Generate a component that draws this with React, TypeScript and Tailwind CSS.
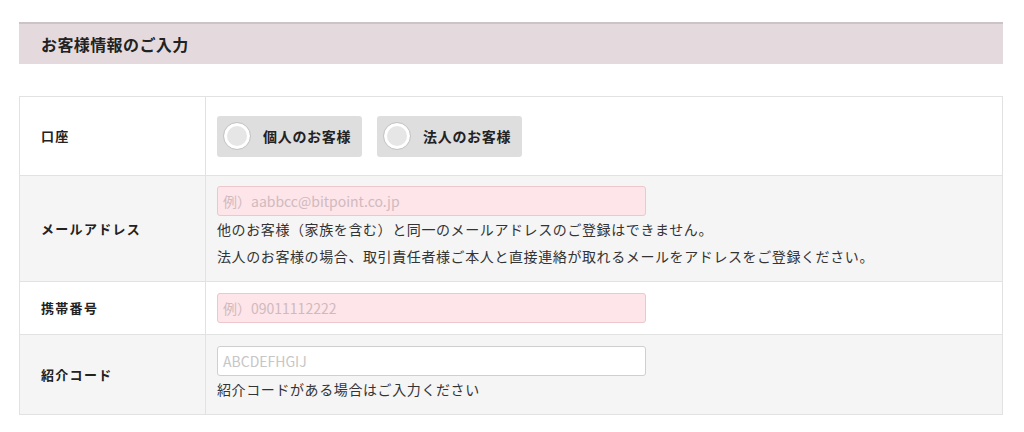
import React from "react";

const font = { fontFamily: '"Noto Sans CJK JP", "Noto Sans", sans-serif' };

function Radio({ label }: { label: string }) {
  return (
    <div className="flex h-[41px] w-[145px] items-center rounded-[3px] bg-[#dedede] pl-[6px]">
      <div className="h-[28px] w-[28px] rounded-full border border-[#c4c4c4] bg-[#e6e6e6] shadow-[inset_0_0_0_3px_#ffffff]" />
      <span className="ml-[12px] text-[14px] font-bold tracking-[0.7px] text-[#222]">{label}</span>
    </div>
  );
}

function Input({ placeholder, pink }: { placeholder: string; pink?: boolean }) {
  return (
    <div
      className={
        "flex h-[30px] w-[429px] items-center rounded-[3px] border px-[5px] text-[14px] " +
        (pink
          ? "border-[#ecc7cc] bg-[#fde5e9] text-[#d0babe]"
          : "border-[#cfcfcf] bg-white text-[#c6c6c6]")
      }
    >
      {placeholder}
    </div>
  );
}

const label =
  "flex w-[186px] items-center border-r border-[#e2e2e2] pl-[21px] text-[13px] font-bold tracking-[1.3px] text-[#222]";
const body = "text-[14px] leading-[27px] tracking-[0.6px] text-[#333]";

export default function App() {
  return (
    <div className="h-[432px] w-[1024px] overflow-hidden bg-white" style={font}>
      <div className="pl-[19px] pr-[21px] pt-[22px]">
        <div className="flex h-[42px] items-center border-t-2 border-[#cbc3c6] bg-[#e4dadd] pl-[22px]">
          <span className="text-[16px] font-bold tracking-[0.4px] text-[#222]">お客様情報のご入力</span>
        </div>
        <div className="mt-[32px] border border-[#e2e2e2]">
          <div className="flex h-[79px] border-b border-[#e2e2e2] bg-white">
            <div className={label}>口座</div>
            <div className="flex items-center gap-[15px] pl-[11px]">
              <Radio label="個人のお客様" />
              <Radio label="法人のお客様" />
            </div>
          </div>
          <div className="flex h-[106px] border-b border-[#e2e2e2] bg-[#f5f5f5]">
            <div className={label}>メールアドレス</div>
            <div className="pl-[11px] pt-[10px]">
              <Input placeholder="例）aabbcc@bitpoint.co.jp" pink />
              <p className={body}>
                他のお客様（家族を含む）と同一のメールアドレスのご登録はできません。
              </p>
              <p className={body}>
                法人のお客様の場合、取引責任者様ご本人と直接連絡が取れるメールをアドレスをご登録ください。
              </p>
            </div>
          </div>
          <div className="flex h-[53px] border-b border-[#e2e2e2] bg-white">
            <div className={label}>携帯番号</div>
            <div className="flex items-center pl-[11px]">
              <Input placeholder="例）09011112222" pink />
            </div>
          </div>
          <div className="flex h-[79px] bg-[#f5f5f5]">
            <div className={label}>紹介コード</div>
            <div className="pl-[11px] pt-[11px]">
              <Input placeholder="ABCDEFHGIJ" />
              <p className={body}>紹介コードがある場合はご入力ください</p>
            </div>
          </div>
        </div>
      </div>
    </div>
  );
}
